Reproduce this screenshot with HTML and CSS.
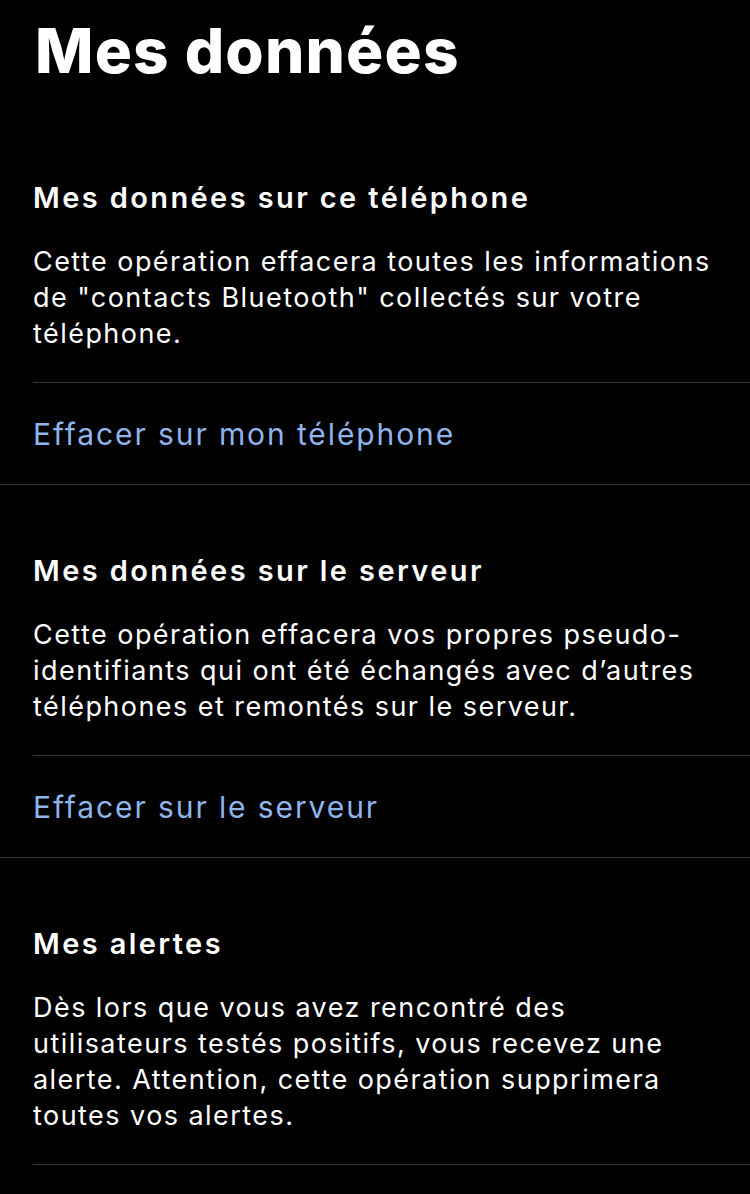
FILE: index.html
```html
<!DOCTYPE html>
<html lang="fr">
<head>
<meta charset="utf-8">
<title>Mes données</title>
<link rel="stylesheet" href="styles.css">
</head>
<body>
<main class="page">
  <h1 class="title">Mes données</h1>

  <section class="section">
    <h2 class="heading">Mes données sur ce téléphone</h2>
    <p class="text">Cette opération effacera toutes les informations de "contacts Bluetooth" collectés sur votre téléphone.</p>
    <div class="action"><span class="link">Effacer sur mon téléphone</span></div>
  </section>

  <section class="section">
    <h2 class="heading">Mes données sur le serveur</h2>
    <p class="text">Cette opération effacera vos propres pseudo-identifiants qui ont été échangés avec d’autres téléphones et remontés sur le serveur.</p>
    <div class="action"><span class="link">Effacer sur le serveur</span></div>
  </section>

  <section class="section last">
    <h2 class="heading">Mes alertes</h2>
    <p class="text">Dès lors que vous avez rencontré des utilisateurs testés positifs, vous recevez une alerte. Attention, cette opération supprimera toutes vos alertes.</p>
  </section>
</main>
</body>
</html>
```

FILE: styles.css
```css
html, body {
  margin: 0;
  padding: 0;
  background: #000;
  color: #fff;
}

.page {
  width: 750px;
  height: 1194px;
  overflow: hidden;
}

.title {
  margin: 0;
  padding: 11px 0 0 35px;
  height: 80px;
  font-family: "Inter", sans-serif;
  font-weight: 800;
  font-size: 62px;
  line-height: 80px;
  letter-spacing: 1.2px;
}

.section {
  border-bottom: 1px solid #38383a;
  padding-top: 89px;
}

.section + .section {
  padding-top: 68px;
}

.heading {
  margin: 0 0 0 33px;
  font-family: "Inter", sans-serif;
  font-weight: 600;
  font-size: 29px;
  line-height: 36px;
  letter-spacing: 2.4px;
}

.text {
  margin: 28px 0 0 33px;
  padding: 0 36px 30px 0;
  border-bottom: 1px solid #38383a;
  font-family: "Inter", sans-serif;
  font-size: 27px;
  line-height: 36px;
  letter-spacing: 1.45px;
}

.action {
  height: 101px;
  display: flex;
  align-items: center;
  padding-left: 33px;
}

.link {
  font-family: "Inter", sans-serif;
  font-size: 30px;
  line-height: 36px;
  letter-spacing: 1.9px;
  color: #8fb4ec;
}

.section.last {
  border-bottom: none;
}
```
